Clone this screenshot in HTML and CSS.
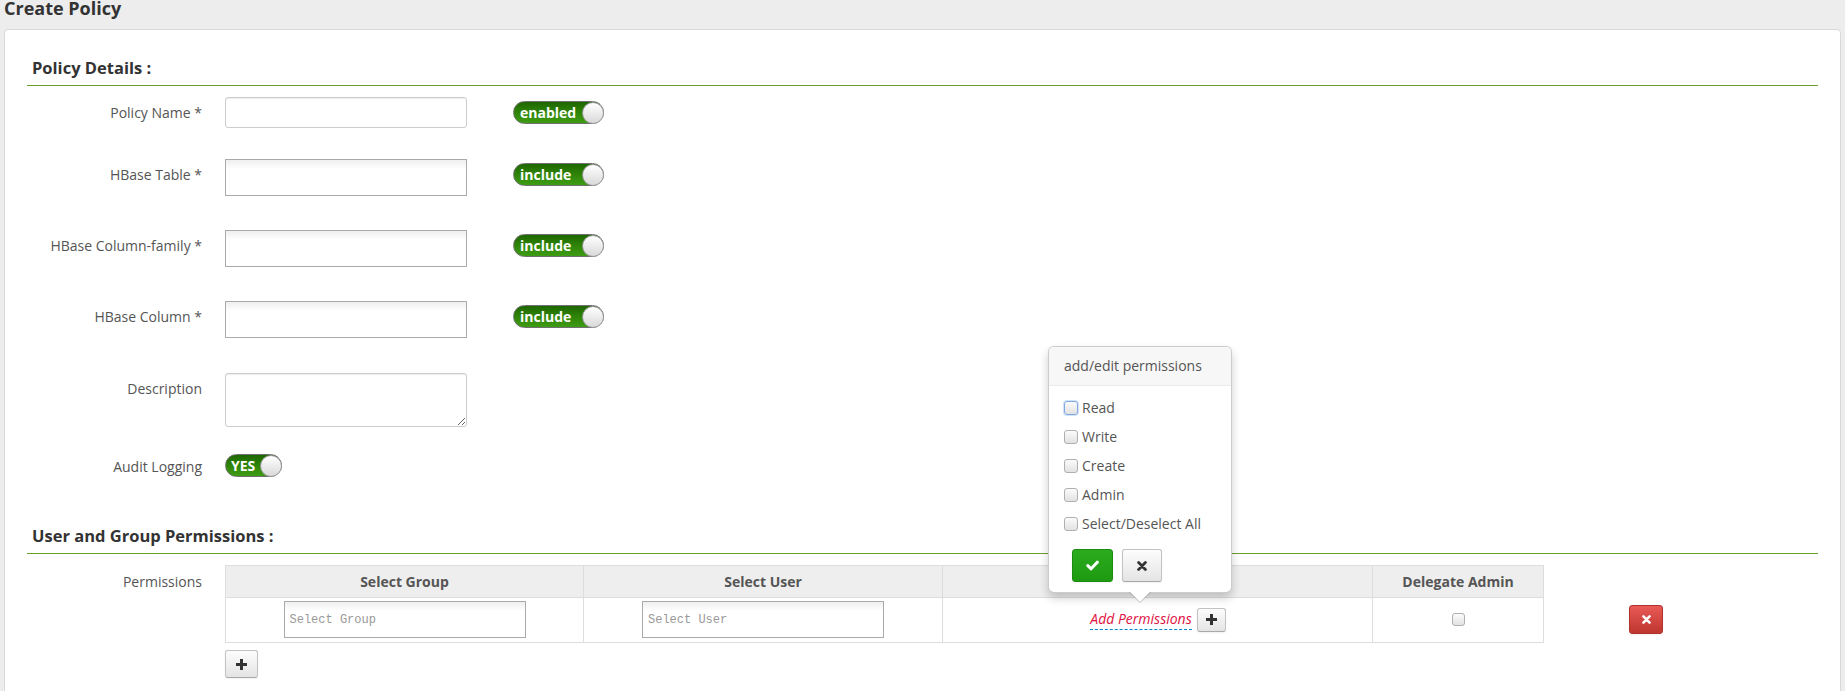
FILE: index.html
```html
<!DOCTYPE html>
<html lang="en">
<head>
<meta charset="utf-8">
<title>Create Policy</title>
<link rel="stylesheet" href="styles.css">
</head>
<body>
<h3 class="page-title">Create Policy</h3>
<div class="card">
  <div class="section-title">Policy Details :</div>

  <div class="form-row row-a">
    <label class="label">Policy Name *</label>
    <input class="text-input" type="text">
    <span class="toggle toggle-wide"><span class="toggle-text">enabled</span><span class="knob"></span></span>
  </div>

  <div class="form-row row-b">
    <label class="label">HBase Table *</label>
    <input class="select-input" type="text">
    <span class="toggle toggle-wide"><span class="toggle-text">include</span><span class="knob"></span></span>
  </div>

  <div class="form-row row-b">
    <label class="label">HBase Column-family *</label>
    <input class="select-input" type="text">
    <span class="toggle toggle-wide"><span class="toggle-text">include</span><span class="knob"></span></span>
  </div>

  <div class="form-row row-c">
    <label class="label">HBase Column *</label>
    <input class="select-input" type="text">
    <span class="toggle toggle-wide"><span class="toggle-text">include</span><span class="knob"></span></span>
  </div>

  <div class="form-row row-d">
    <label class="label">Description</label>
    <textarea class="textarea"></textarea>
  </div>

  <div class="form-row">
    <label class="label label-audit">Audit Logging</label>
    <span class="toggle toggle-small"><span class="toggle-text">YES</span><span class="knob"></span></span>
  </div>

  <div class="section-title section-second">User and Group Permissions :</div>

  <div class="form-row">
    <label class="label label-perm">Permissions</label>
    <div class="perm-area">
      <div class="perm-line">
        <table class="perm-table">
          <thead>
            <tr>
              <th class="c1">Select Group</th>
              <th class="c2">Select User</th>
              <th class="c3"></th>
              <th class="c4">Delegate Admin</th>
            </tr>
          </thead>
          <tbody>
            <tr>
              <td><input class="select-input cell-input" type="text" placeholder="Select Group"></td>
              <td><input class="select-input cell-input" type="text" placeholder="Select User"></td>
              <td>
                <div class="add-perm">
                  <a class="editable-empty">Add Permissions</a>
                  <span class="btn btn-mini">
                    <svg width="11" height="11" viewBox="0 0 11 11"><path d="M4 0h3v4h4v3H7v4H4V7H0V4h4z" fill="#333"/></svg>
                  </span>
                </div>
              </td>
              <td><span class="cb cb-small"></span></td>
            </tr>
          </tbody>
        </table>
        <span class="btn btn-danger">
          <svg width="9" height="9" viewBox="0 0 10 10"><path d="M1.6 1.6l6.8 6.8M8.4 1.6l-6.8 6.8" stroke="#fff" stroke-width="2.8" stroke-linecap="round"/></svg>
        </span>
      </div>
      <span class="btn btn-add">
        <svg width="11" height="11" viewBox="0 0 11 11"><path d="M4 0h3v4h4v3H7v4H4V7H0V4h4z" fill="#333"/></svg>
      </span>
    </div>
  </div>
</div>

<div class="popover">
  <div class="popover-title">add/edit permissions</div>
  <div class="popover-body">
    <div class="pop-item"><span class="cb cb-focus"></span>Read</div>
    <div class="pop-item"><span class="cb"></span>Write</div>
    <div class="pop-item"><span class="cb"></span>Create</div>
    <div class="pop-item"><span class="cb"></span>Admin</div>
    <div class="pop-item"><span class="cb"></span>Select/Deselect All</div>
    <div class="pop-buttons">
      <span class="btn btn-success">
        <svg width="13" height="11" viewBox="0 0 13 11"><path d="M1.8 5.6l3.3 3.2 6.2-6.6" stroke="#fff" stroke-width="3" fill="none" stroke-linecap="round" stroke-linejoin="round"/></svg>
      </span>
      <span class="btn btn-cancel">
        <svg width="10" height="10" viewBox="0 0 10 10"><path d="M1.6 1.6l6.8 6.8M8.4 1.6l-6.8 6.8" stroke="#333" stroke-width="2.8" stroke-linecap="round"/></svg>
      </span>
    </div>
  </div>
</div>
</body>
</html>
```

FILE: styles.css
```css
* { box-sizing: border-box; }

html, body {
  margin: 0;
  padding: 0;
}

body {
  display: flow-root;
  background: #ededed;
  font-family: "Open Sans", "Liberation Sans", sans-serif;
  font-size: 14px;
  color: #555;
  width: 1845px;
  height: 691px;
  overflow: hidden;
}

.page-title {
  margin: -2px 0 0 4px;
  height: 20px;
  font-size: 18px;
  line-height: 20px;
  font-weight: 700;
  color: #333;
}

.card {
  margin: 11px 0 0 4px;
  width: 1837px;
  height: 670px;
  background: #fff;
  border: 1px solid #d9d9d9;
  border-radius: 4px;
  padding: 27px 22px 0 22px;
}

.section-title {
  font-size: 16.5px;
  font-weight: 700;
  color: #333;
  line-height: 22px;
  padding: 0 5px 6px;
  border-bottom: 1px solid #6a9f2e;
  margin-bottom: 11px;
}

.section-second {
  margin-top: 48px;
}

.form-row {
  display: flex;
  align-items: flex-start;
}

.row-a { margin-bottom: 31px; }
.row-b { margin-bottom: 34px; }
.row-c { margin-bottom: 35px; }
.row-d { margin-bottom: 27px; }

.label {
  flex: none;
  width: 175px;
  margin-right: 23px;
  padding-top: 6px;
  text-align: right;
  font-size: 14px;
  line-height: 20px;
  color: #555;
}

.label-audit { padding-top: 3px; }
.label-perm { padding-top: 7px; }

.text-input {
  width: 242px;
  height: 31px;
  border: 1px solid #ccc;
  border-radius: 3px;
  box-shadow: inset 0 1px 1px rgba(0, 0, 0, 0.075);
  background: #fff;
  margin: 0;
}

.select-input {
  width: 242px;
  height: 37px;
  border: 1px solid #aaa;
  border-radius: 0;
  margin: 0;
  background: linear-gradient(to bottom, #efefef 0, #fff 9px);
  font-family: "Liberation Mono", monospace;
  font-size: 12px;
  padding: 0 5px;
}

.select-input::placeholder {
  color: #999;
}

.textarea {
  width: 242px;
  height: 54px;
  border: 1px solid #ccc;
  border-radius: 3px;
  box-shadow: inset 0 1px 1px rgba(0, 0, 0, 0.075);
  margin: 0;
  resize: vertical;
}

.toggle {
  flex: none;
  display: flex;
  align-items: center;
  justify-content: space-between;
  height: 23px;
  border-radius: 12px;
  border: 1px solid #707070;
  background: linear-gradient(to bottom, #1d6700, #2f8408 50%, #3e9c14);
  padding-left: 6px;
  color: #fff;
  font-weight: 700;
  font-size: 14px;
  line-height: 20px;
}

.toggle-wide {
  width: 91px;
  margin-left: 46px;
  margin-top: 4px;
}

.toggle-small {
  width: 57px;
  padding-left: 5px;
}

.knob {
  width: 22px;
  height: 22px;
  margin-right: -1px;
  border-radius: 50%;
  border: 1px solid #9a9a9a;
  background: linear-gradient(to bottom, #fff, #d9d9d9);
}

.perm-area {
  display: flex;
  flex-direction: column;
  align-items: flex-start;
}

.perm-line {
  display: flex;
  align-items: flex-start;
}

.perm-table {
  border-collapse: collapse;
  table-layout: fixed;
  width: 1318px;
}

.perm-table th,
.perm-table td {
  border: 1px solid #ddd;
}

.perm-table th {
  background: #eee;
  height: 32px;
  padding: 0;
  font-size: 14px;
  font-weight: 700;
  color: #555;
  text-align: center;
  vertical-align: middle;
}

.perm-table td {
  height: 45px;
  padding: 3px 0 4px;
  text-align: center;
  vertical-align: middle;
}

.c1 { width: 358px; }
.c2 { width: 359px; }
.c3 { width: 430px; }
.c4 { width: 171px; }

.cell-input {
  display: block;
  margin: 0 auto;
}

.add-perm {
  display: flex;
  align-items: center;
  justify-content: center;
  gap: 5px;
  padding-left: 1px;
}

.editable-empty {
  color: #dd1144;
  font-style: italic;
  font-size: 14px;
  line-height: 20px;
  border-bottom: 1px dashed #0088cc;
  text-decoration: none;
}

.btn {
  display: flex;
  align-items: center;
  justify-content: center;
  flex: none;
  border: 1px solid #c2c2c2;
  border-bottom-color: #a8a8a8;
  border-radius: 3px;
  background: linear-gradient(to bottom, #fdfdfd, #e4e4e4);
  box-shadow: 0 1px 2px rgba(0, 0, 0, 0.06);
}

.btn-mini {
  width: 29px;
  height: 24px;
}

.btn-add {
  width: 33px;
  height: 28px;
  margin-top: 7px;
}

.btn-danger {
  width: 34px;
  height: 29px;
  margin-left: 85px;
  margin-top: 40px;
  border-color: #b0332d;
  background: linear-gradient(to bottom, #e85a55, #bf3530);
}

.cb {
  display: inline-block;
  flex: none;
  width: 14px;
  height: 14px;
  border: 1px solid #b0b0b0;
  border-radius: 3px;
  background: linear-gradient(to bottom, #fbfbfb, #e2e2e2);
}

.cb-small {
  width: 13px;
  height: 13px;
  vertical-align: middle;
  margin-top: -3px;
}

.cb-focus {
  border-color: #7fa8e4;
  box-shadow: 0 0 0 1px #d3e2f8;
}

.popover {
  position: absolute;
  left: 1048px;
  top: 346px;
  width: 184px;
  height: 247px;
  background: #fff;
  border: 1px solid rgba(0, 0, 0, 0.2);
  border-radius: 6px;
  box-shadow: 0 5px 10px rgba(0, 0, 0, 0.2);
}

.popover::before,
.popover::after {
  content: "";
  position: absolute;
  left: 50%;
  border-style: solid;
  border-color: transparent;
  border-bottom-width: 0;
}

.popover::before {
  bottom: -11px;
  margin-left: -11px;
  border-width: 11px 11px 0;
  border-top-color: rgba(0, 0, 0, 0.22);
}

.popover::after {
  bottom: -10px;
  margin-left: -10px;
  border-width: 10px 10px 0;
  border-top-color: #fff;
}

.popover-title {
  height: 39px;
  padding: 0 15px;
  background: #f7f7f7;
  border-bottom: 1px solid #ebebeb;
  border-radius: 5px 5px 0 0;
  font-size: 14px;
  line-height: 38px;
  color: #555;
}

.popover-body {
  padding: 7px 15px 10px;
}

.pop-item {
  display: flex;
  align-items: center;
  gap: 4px;
  height: 29px;
  font-size: 14px;
  color: #555;
}

.pop-buttons {
  display: flex;
  gap: 9px;
  margin-top: 11px;
  padding-left: 8px;
}

.btn-success {
  width: 41px;
  height: 33px;
  border-color: #1b8c10;
  background: linear-gradient(to bottom, #2bab1e, #1f9a12);
}

.btn-cancel {
  width: 40px;
  height: 33px;
}
```
